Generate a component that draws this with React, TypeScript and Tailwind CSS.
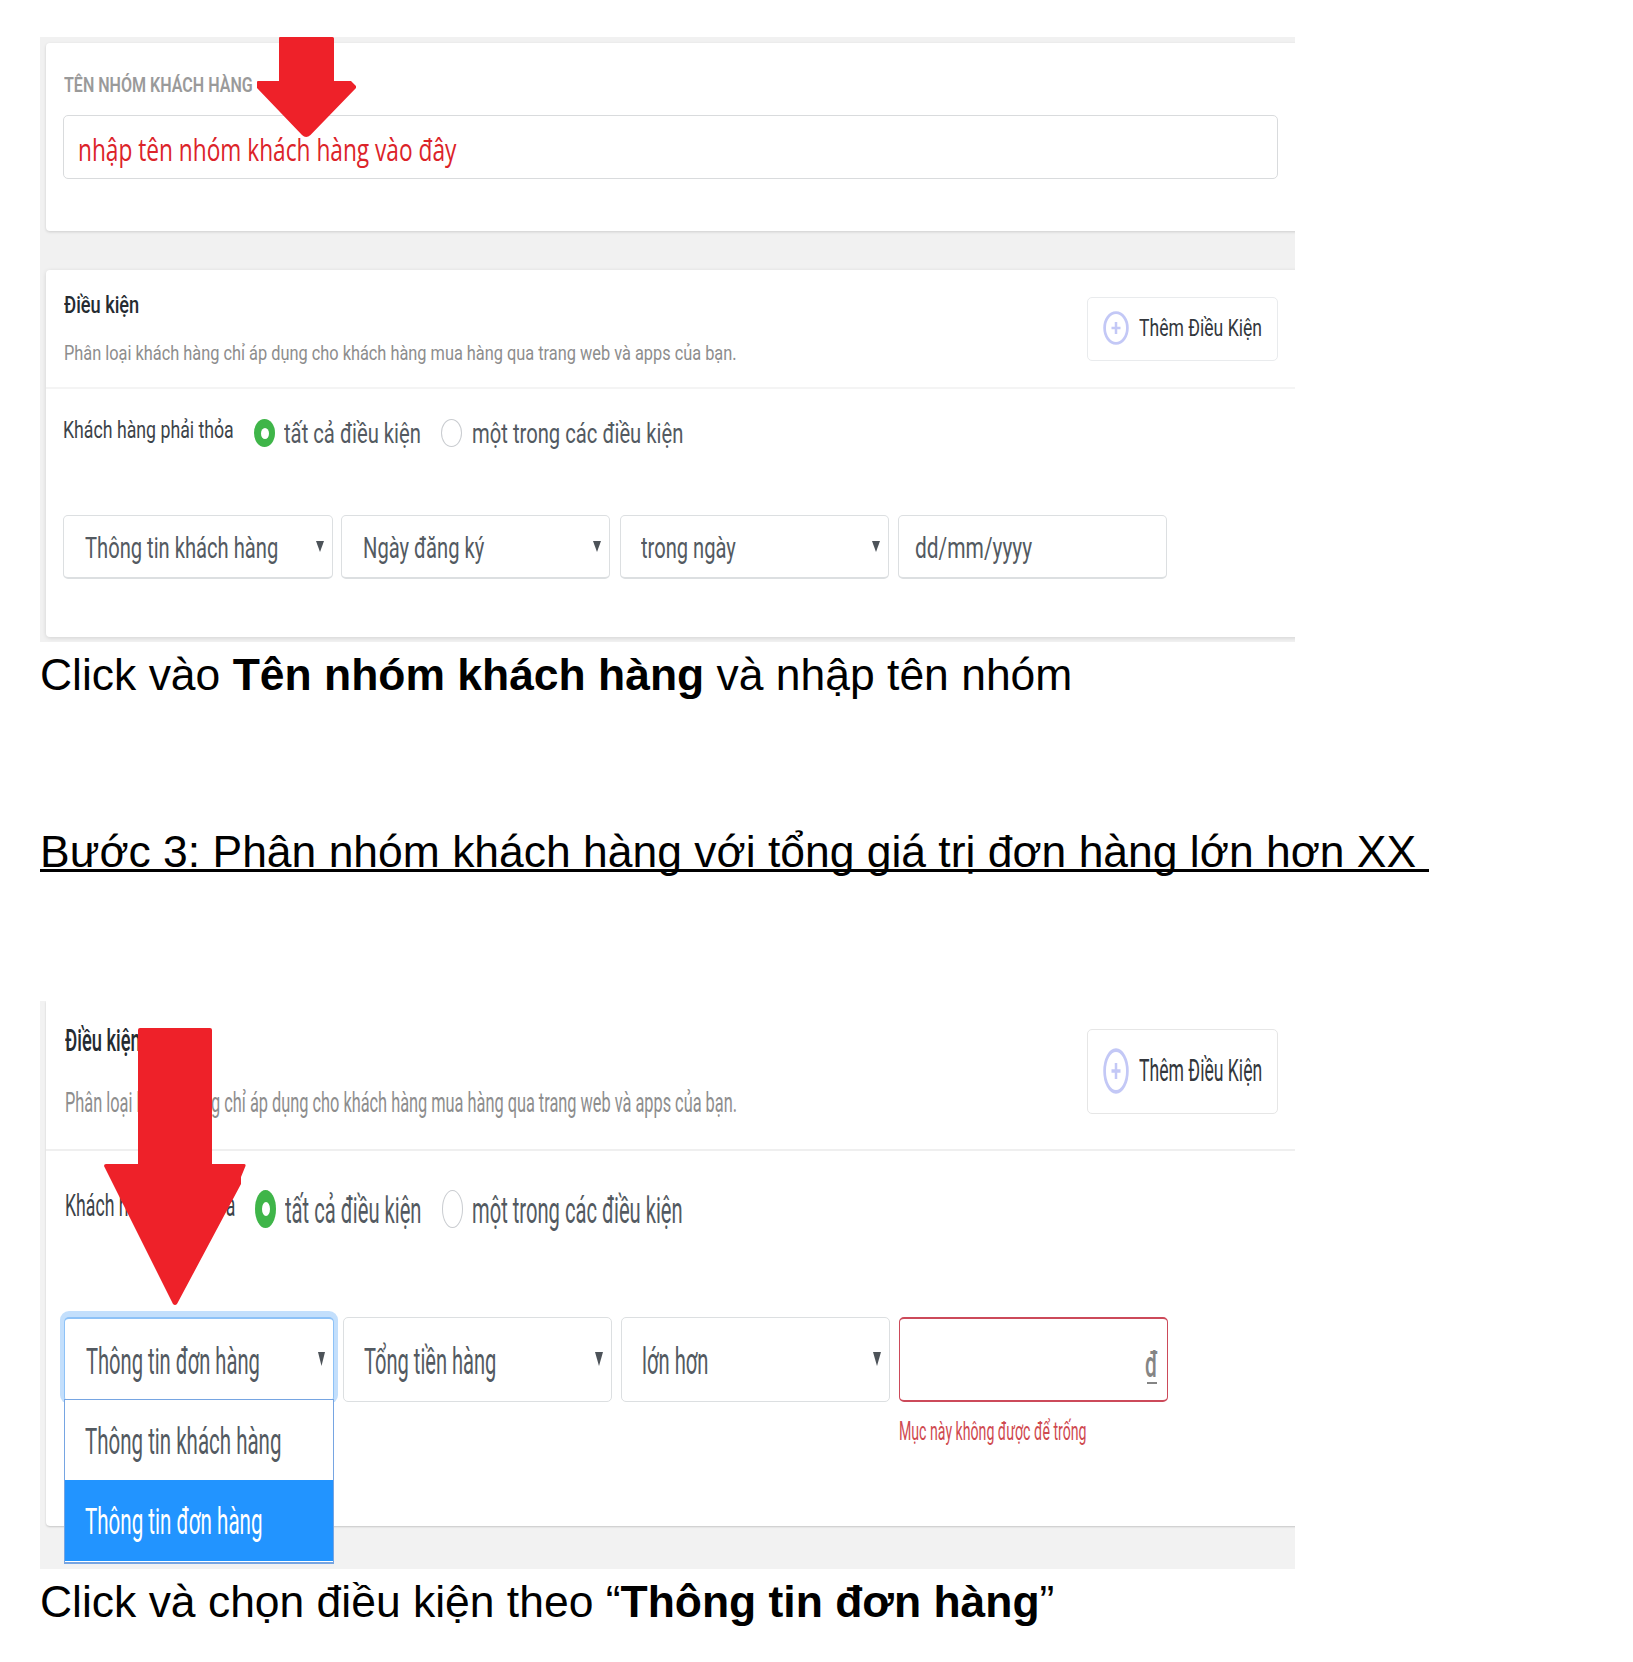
import type { ReactNode } from "react";

/** One line of text; `scale` holds the class that condenses it to the width of its box. */
function Line({ className = "", scale, children }: { className?: string; scale: string; children: ReactNode }) {
  return (
    <div className={`shrink-0 leading-none whitespace-nowrap ${className}`}>
      <span className={`inline-block origin-left align-top whitespace-pre ${scale}`}>{children}</span>
    </div>
  );
}

function Caret({ className }: { className: string }) {
  return (
    <svg className={`shrink-0 ${className}`} viewBox="0 0 8 10" preserveAspectRatio="none" fill="#4d5359">
      <path d="M0 0H8L4 10Z" />
    </svg>
  );
}

function PlusIcon({ className }: { className: string }) {
  return (
    <svg className={`shrink-0 ${className}`} viewBox="0 0 26 34" preserveAspectRatio="none" fill="none" stroke="#c3c8f6">
      <ellipse cx="13" cy="17" rx="11.4" ry="15.4" strokeWidth="2.7" />
      <path d="M13 11V23M8.5 17H17.5" strokeWidth="2.5" />
    </svg>
  );
}

const heading = "font-medium text-[#252b31]";
const muted = "text-[#8d8d8d]";
const body = "text-[#3c4349]";
const option = "text-[#535a61]";
const control = "flex shrink-0 items-start rounded-[5px] border border-[#dcdfe1] bg-white";

function NameFigure() {
  return (
    <section className="relative ml-10 h-[605px] w-[1255px] overflow-hidden bg-[#f1f1f1] pt-1.5 pl-1.5 font-[Roboto,sans-serif]">
      <div className="-mr-2 h-[188px] rounded-l-[4px] bg-white pt-[32px] pl-[17px] shadow-[0_1px_3px_rgba(0,0,0,0.15)]">
        <Line className="h-[40px] w-[190px] pl-px text-[20.5px] font-semibold text-[#9a9a9a]" scale="scale-x-[0.783]">
          TÊN NHÓM KHÁCH HÀNG
        </Line>
        <div className="h-16 w-[1215px] rounded-[5px] border border-[#d9dbdd] pt-[18px] pl-[13.500px]">
          <Line className="w-[380px] font-['Open_Sans',sans-serif] text-[31px] text-[#dc2329]" scale="scale-x-[0.732]">
            nhập tên nhóm khách hàng vào đây
          </Line>
        </div>
      </div>

      <div className="-mr-2 mt-[39px] h-[367px] rounded-l-[4px] bg-white shadow-[0_1px_4px_rgba(0,0,0,0.13)]">
        <div className="flex h-[119px] justify-between border-b-2 border-[#f4f4f4] pr-[25px] pl-[17.500px]">
          <div className="pt-[24px]">
            <Line className={`w-[75px] text-[23.5px] ${heading}`} scale="scale-x-[0.775]">
              Điều kiện
            </Line>
            <Line className={`mt-[25px] w-[674px] text-[21px] ${muted}`} scale="scale-x-[0.7783]">
              Phân loại khách hàng chỉ áp dụng cho khách hàng mua hàng qua trang web và apps của bạn.
            </Line>
          </div>
          <button className="mt-[27px] flex h-16 w-[191px] items-start rounded-[5px] border border-[#e9ebed] pl-[15px] text-left">
            <PlusIcon className="mt-[13px] h-[34px] w-[26px]" />
            <Line className="mt-[18px] ml-[10px] w-[124px] text-[24.5px] text-[#33373c]" scale="scale-x-[0.717]">
              Thêm Điều Kiện
            </Line>
          </button>
        </div>

        <div className="flex h-[126px] items-start pl-[17px]">
          <Line className={`mt-[29px] w-[171px] text-[24px] ${body}`} scale="scale-x-[0.738]">
            Khách hàng phải thỏa
          </Line>
          <span className="mt-[30px] ml-5 flex h-[28px] w-[21px] shrink-0 items-center justify-center rounded-[50%] bg-[#3fb549]">
            <span className="h-[11px] w-[8px] rounded-[50%] bg-white" />
          </span>
          <Line className={`mt-[31px] ml-[9px] w-[138px] text-[28px] ${option}`} scale="scale-x-[0.7227]">
            tất cả điều kiện
          </Line>
          <span className="mt-[30px] ml-[19px] h-[28px] w-[21px] shrink-0 rounded-[50%] border border-[#c9ccd0]" />
          <Line className={`mt-[31px] ml-[9.500px] w-[212px] text-[28px] ${option}`} scale="scale-x-[0.722]">
            một trong các điều kiện
          </Line>
        </div>

        <div className="flex pl-[17px]">
          <div className={`${control} mr-[8px] h-16 w-[270px] justify-between border-b-2 pr-2 pl-[21px]`}>
            <Line className={`mt-[18px] w-[194px] text-[29px] ${option}`} scale="scale-x-[0.6953]">
              Thông tin khách hàng
            </Line>
            <Caret className="mt-[25px] h-[11px] w-2" />
          </div>
          <div className={`${control} mr-[10px] h-16 w-[269px] justify-between border-b-2 pr-2 pl-[21px]`}>
            <Line className={`mt-[18px] w-[122px] text-[29px] ${option}`} scale="scale-x-[0.695]">
              Ngày đăng ký
            </Line>
            <Caret className="mt-[25px] h-[11px] w-2" />
          </div>
          <div className={`${control} mr-[9px] h-16 w-[269px] justify-between border-b-2 pr-2 pl-[20px]`}>
            <Line className={`mt-[18px] w-[95px] text-[29px] ${option}`} scale="scale-x-[0.694]">
              trong ngày
            </Line>
            <Caret className="mt-[25px] h-[11px] w-2" />
          </div>
          <div className={`${control} h-16 w-[269px] border-b-2 pl-[16px]`}>
            <Line className={`mt-[18px] w-[118px] text-[29px] ${option}`} scale="scale-x-[0.721]">
              dd/mm/yyyy
            </Line>
          </div>
        </div>
      </div>

      <svg className="absolute top-0 left-[217px] h-[100px] w-[99px]" viewBox="0 0 99 100" fill="#ee2129">
        <path d="M22 1Q22 0 23 0H75.500Q77 0 77 1.500V44H94L99 49V51L53.500 98Q49 102 45 98L0 51V45Q0 44 1 44H22Z" />
      </svg>
    </section>
  );
}

function OrderFigure() {
  return (
    <section className="relative ml-10 h-[568px] w-[1255px] overflow-hidden bg-[#f2f2f2] pl-1.5 font-[Roboto,sans-serif]">
      <div className="-mr-2 h-[525px] rounded-bl-[4px] bg-white shadow-[0_1px_2px_rgba(0,0,0,0.18)]">
        <div className="flex h-[150px] justify-between border-b-2 border-[#efefef] pr-[25px] pl-[18.500px]">
          <div className="pt-[24px]">
            <Line className={`w-[75px] text-[31.5px] ${heading}`} scale="scale-x-[0.582]">
              Điều kiện
            </Line>
            <Line className={`mt-[32px] w-[674px] text-[28.5px] ${muted}`} scale="scale-x-[0.573]">
              Phân loại khách hàng chỉ áp dụng cho khách hàng mua hàng qua trang web và apps của bạn.
            </Line>
          </div>
          <button className="mt-[28px] flex h-[85px] w-[191px] items-start rounded-[5px] border border-[#e6e6e6] pl-[15px] text-left">
            <PlusIcon className="mt-[18px] h-[46px] w-[26px]" />
            <Line className="mt-[24px] ml-[10px] w-[124px] text-[32px] text-[#33373c]" scale="scale-x-[0.55]">
              Thêm Điều Kiện
            </Line>
          </button>
        </div>

        <div className="flex h-[166px] items-start pl-[18.500px]">
          <Line className={`mt-[38px] w-[171px] text-[32px] ${body}`} scale="scale-x-[0.552]">
            Khách hàng phải thỏa
          </Line>
          <span className="mt-[39px] ml-[19.500px] flex h-[38px] w-[21px] shrink-0 items-center justify-center rounded-[50%] bg-[#3fb549]">
            <span className="h-[14px] w-[8px] rounded-[50%] bg-white" />
          </span>
          <Line className={`mt-[41px] ml-[9px] w-[138px] text-[37px] ${option}`} scale="scale-x-[0.5453]">
            tất cả điều kiện
          </Line>
          <span className="mt-[39px] ml-[19px] h-[38px] w-[21px] shrink-0 rounded-[50%] border border-[#c9ccd0]" />
          <Line className={`mt-[41px] ml-[9px] w-[212px] text-[37px] ${option}`} scale="scale-x-[0.5446]">
            một trong các điều kiện
          </Line>
        </div>

        <div className="flex gap-[9px] pl-[18px]">
          <div className="relative">
            <div className="flex h-[85px] w-[270px] items-start justify-between rounded-[5px] border-x border-t-2 border-[#8ec2f7] bg-white pr-2 pl-[21px] shadow-[0_-2px_0_4px_#c3dffc]">
              <Line className={`mt-[24px] w-[175px] text-[37px] ${option}`} scale="scale-x-[0.5446]">
                Thông tin đơn hàng
              </Line>
              <Caret className="mt-[33px] h-[14px] w-[7px]" />
            </div>
            <div className="absolute top-[82px] left-0 w-[270px] border border-b-2 border-[#76a5e2] bg-white pb-px">
              <div className="h-[80px] pt-[23px] pl-[20px]">
                <Line className={`w-[197px] text-[37px] ${option}`} scale="scale-x-[0.554]">
                  Thông tin khách hàng
                </Line>
              </div>
              <div className="h-[81px] bg-[#2294ff] pt-[23px] pl-[20px]">
                <Line className="w-[178px] text-[37px] text-white" scale="scale-x-[0.556]">
                  Thông tin đơn hàng
                </Line>
              </div>
            </div>
          </div>
          <div className={`${control} h-[85px] w-[269px] justify-between pr-2 pl-[20px]`}>
            <Line className={`mt-[25px] w-[133px] text-[37px] ${option}`} scale="scale-x-[0.543]">
              Tổng tiền hàng
            </Line>
            <Caret className="mt-[34px] h-[14px] w-2" />
          </div>
          <div className={`${control} h-[85px] w-[269px] justify-between pr-2 pl-[20px]`}>
            <Line className={`mt-[25px] w-[68px] text-[37px] ${option}`} scale="scale-x-[0.546]">
              lớn hơn
            </Line>
            <Caret className="mt-[34px] h-[14px] w-2" />
          </div>
          <div>
            <div className="flex h-[85px] w-[269px] items-start justify-end rounded-[5px] border border-y-2 border-[#cc4a5a] pr-[9px]">
              <div className="mt-[28px] flex flex-col items-center">
                <Line className="h-[35px] w-[13px] text-[36px] font-medium text-[#858585]" scale="scale-x-[0.58]">
                  đ
                </Line>
                <span className="h-0.5 w-[10px] bg-[#858585]" />
              </div>
            </div>
            <Line className="mt-[17px] w-[187px] text-[25.5px] text-[#cf4a50]" scale="scale-x-[0.554]">
              Mục này không được để trống
            </Line>
          </div>
        </div>
      </div>

      <svg className="absolute top-[27px] left-[64px] h-[278px] w-[142px]" viewBox="0 0 142 278" fill="#ee2129">
        <path d="M34 2Q34 0 36 0H106Q108 0 108 2V136H140Q142 136 141.500 138L137 149V156L73 276Q71 278 69 276L0 138Q0 136 2 136H34Z" />
      </svg>
    </section>
  );
}

export default function App() {
  return (
    <main className="h-[1662px] w-[1633px] overflow-hidden bg-white pt-[37px] font-['Liberation_Sans',sans-serif] text-black">
      <NameFigure />
      <Line className="mt-[11px] ml-10 h-[44px] w-[1033px] text-[44px]" scale="scale-x-[1.01]">
        Click vào <b>Tên nhóm khách hàng</b> và nhập tên nhóm
      </Line>
      <div className="mt-[133px] ml-10 w-[1389px] border-b-[3px] border-black">
        <Line className="h-[39px] w-[1389px] text-[44px]" scale="scale-x-[1.01]">
          {"Bước 3: Phân nhóm khách hàng với tổng giá trị đơn hàng lớn hơn XX "}
        </Line>
      </div>
      <div className="mt-[129px]">
        <OrderFigure />
      </div>
      <Line className="mt-[11px] ml-10 w-[1015px] text-[44px]" scale="scale-x-[1.01]">
        Click và chọn điều kiện theo “<b>Thông tin đơn hàng</b>”
      </Line>
    </main>
  );
}
